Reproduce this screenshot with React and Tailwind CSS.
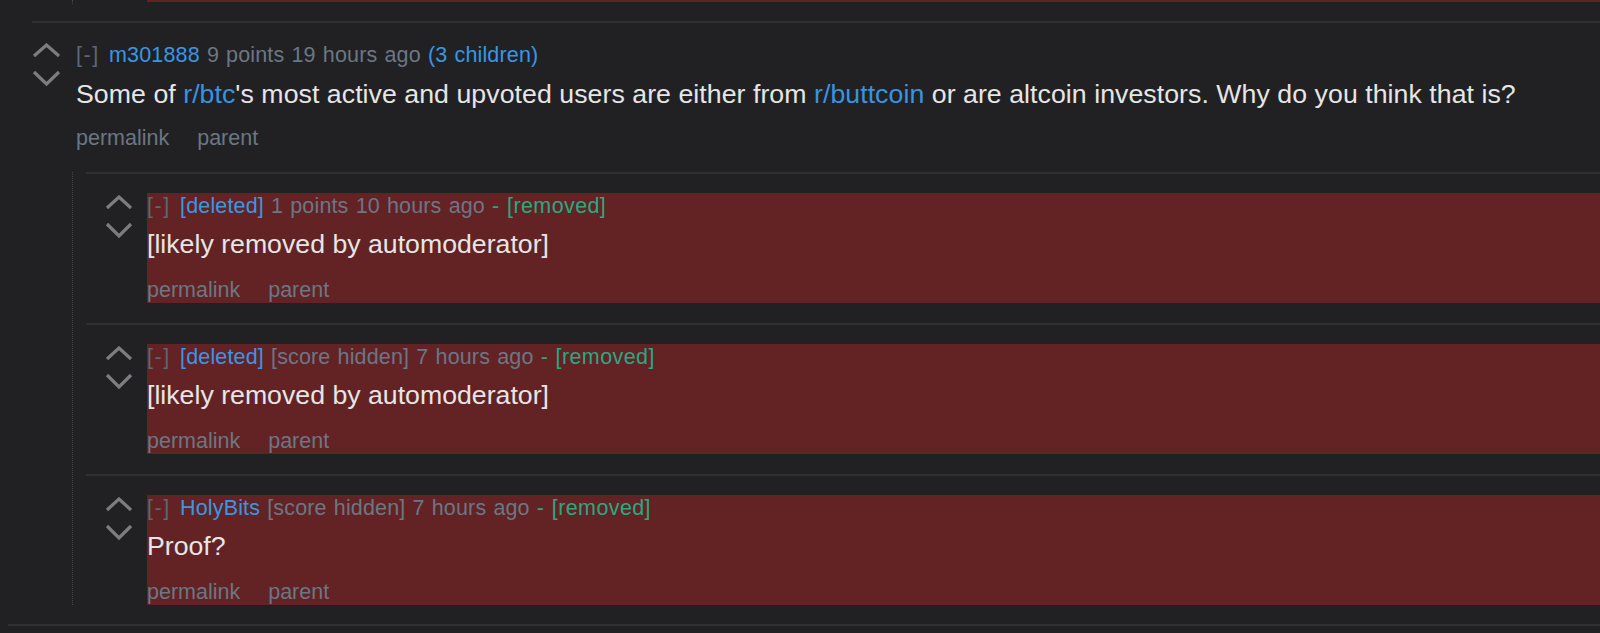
import React from "react";

function Arrows({ w = 29 }) {
  return (
    <svg width={w} height="46" viewBox={`0 0 ${w} 46`} className="block">
      <polyline points={`2,13 ${w / 2},2 ${w - 2},13`} fill="none" stroke="#7d7d7d" strokeWidth="3.2" />
      <polyline points={`2,29 ${w / 2},41 ${w - 2},29`} fill="none" stroke="#7d7d7d" strokeWidth="3.2" />
    </svg>
  );
}

function Meta({ user, rest, extra, extraGreen }) {
  return (
    <div className="h-[24px] leading-[24px] text-[21.5px] tracking-[0.15px] [word-spacing:1px] whitespace-nowrap text-[#6b7784]">
      <span className="text-[#5c6773] tracking-[1.6px]">[-]</span>{" "}
      <span className="text-[#3897e3] ml-[2px]">{user}</span>{" "}
      <span>{rest}</span>{" "}
      {extra && <span className="text-[#3897e3]">{extra}</span>}
      {extraGreen && <span className="text-[#2aa882] tracking-[0.4px]">{extraGreen}</span>}
    </div>
  );
}

function Links() {
  return (
    <div className="h-[24px] leading-[24px] text-[21.5px] text-[#6b7784] flex gap-[28px]">
      <span>permalink</span>
      <span>parent</span>
    </div>
  );
}

function Child({ user, rest, body, last }) {
  return (
    <div className={`border-t-2 border-[#303032] pt-[19px] ${last ? "" : "pb-[20px]"} flex`}>
      <div className="w-[61px] shrink-0 pl-[19px] pt-[2px]">
        <Arrows w={28} />
      </div>
      <div className="flex-1 bg-[#632224] pt-[1px] pb-[1px] h-[110px]">
        <Meta user={user} rest={rest} extraGreen="- [removed]" />
        <div className="mt-[11px] h-[30px] leading-[30px] text-[26.7px] text-[#e6e6e6]">{body}</div>
        <div className="mt-[19px]">
          <Links />
        </div>
      </div>
    </div>
  );
}

export default function App() {
  return (
    <div className="w-[1600px] h-[633px] bg-[#212123] overflow-hidden font-['Liberation_Sans',Arial,sans-serif]">
      {/* remnant of previous comment */}
      <div className="flex h-[21px]">
        <div className="w-[72px] shrink-0" />
        <div className="w-0 h-[4px] border-l border-dotted border-[#46464a]" />
        <div className="ml-[74px] flex-1 h-[2px] bg-[#632224]" />
      </div>

      {/* top-level comment */}
      <div className="ml-[32px] border-t-2 border-[#303032] pt-[20px]">
        <div className="flex">
          <div className="w-[44px] shrink-0">
            <Arrows w={29} />
          </div>
          <div className="flex-1">
            <Meta user="m301888" rest="9 points 19 hours ago" extra="(3 children)" />
            <div className="mt-[12px] h-[30px] leading-[30px] text-[26.7px] tracking-[0.05px] text-[#e6e6e6] whitespace-nowrap">
              Some of <span className="text-[#3893e0]">r/btc</span>'s most active and upvoted users are either from{" "}
              <span className="text-[#3893e0]">r/buttcoin</span> or are altcoin investors. Why do you think that is?
            </div>
            <div className="mt-[17px]">
              <Links />
            </div>
          </div>
        </div>

        {/* children */}
        <div className="mt-[22px] ml-[40px] border-l border-dotted border-[#46464a] pl-[13px]">
          <Child user="[deleted]" rest="1 points 10 hours ago" body="[likely removed by automoderator]" />
          <Child user="[deleted]" rest="[score hidden] 7 hours ago" body="[likely removed by automoderator]" />
          <Child user="HolyBits" rest="[score hidden] 7 hours ago" body="Proof?" last />
        </div>
        <div className="h-[19px]" />
      </div>

      <div className="ml-[8px] border-t-2 border-[#303032]" />
    </div>
  );
}
